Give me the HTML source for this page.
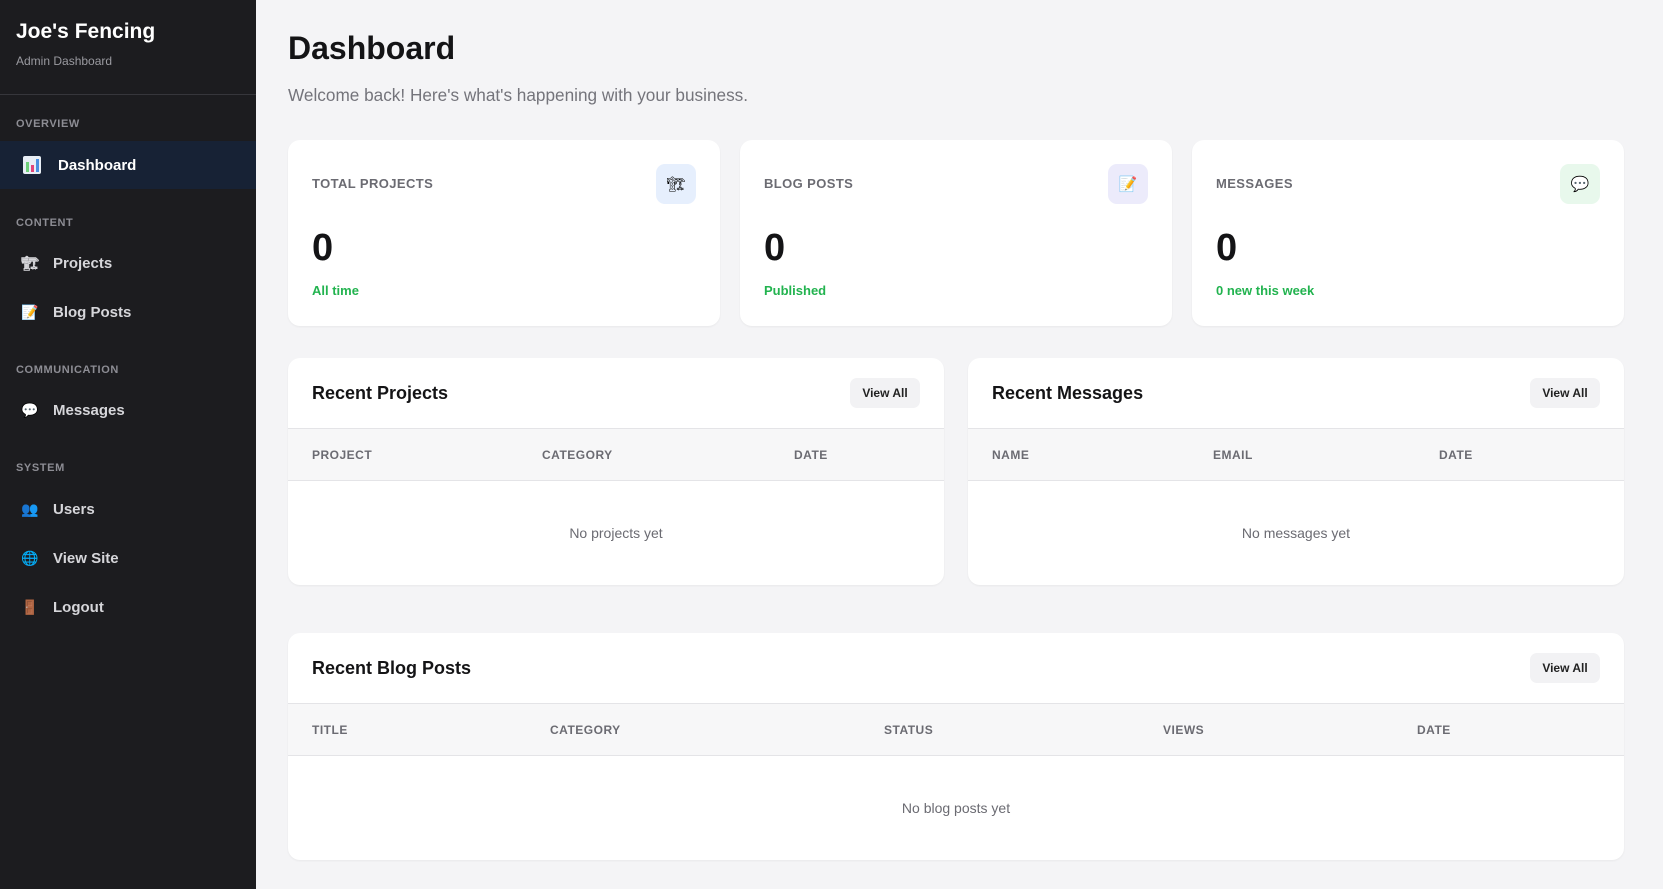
<!DOCTYPE html>
<html><head><meta charset="utf-8"><style>
*{margin:0;padding:0;box-sizing:border-box}
body{width:1663px;height:889px;overflow:hidden;background:#f4f4f6;font-family:"Liberation Sans",sans-serif;position:relative}
.sb{position:absolute;left:0;top:0;width:256px;height:889px;background:#1c1c1f}
.abs{position:absolute}
.sec{position:absolute;left:16px;font-size:11px;font-weight:bold;color:#8d8d94;letter-spacing:.6px}
.item{position:absolute;left:0;width:256px;height:48px;display:flex;align-items:center;padding-left:20px;font-size:15px;font-weight:bold;color:#d6d6da}
.item .ic{width:20px;height:20px;margin-right:13px;font-size:14px;display:flex;align-items:center;justify-content:center}
.card{position:absolute;background:#fff;border-radius:12px;box-shadow:0 1px 2px rgba(0,0,0,.05)}
.lbl{position:absolute;left:24px;top:36px;font-size:13px;font-weight:bold;color:#6b6b72;letter-spacing:.4px}
.num{position:absolute;left:24px;top:87px;font-size:38px;font-weight:bold;color:#141416}
.sub{position:absolute;left:24px;top:143px;font-size:13px;color:#22b34f;font-weight:bold}
.icb{position:absolute;right:24px;top:24px;width:40px;height:40px;border-radius:9px;display:flex;align-items:center;justify-content:center;font-size:15px}
.th{position:absolute;font-size:18px;font-weight:bold;color:#141416;left:24px;top:25px}
.btn{position:absolute;right:24px;top:20px;width:70px;height:30px;background:#f2f2f4;border-radius:7px;font-size:12px;font-weight:bold;color:#222;display:flex;align-items:center;justify-content:center}
.ch{position:absolute;left:0;right:0;background:#f7f7f8;border-top:1px solid #e4e4e7;border-bottom:1px solid #e4e4e7}
.ch span{position:absolute;top:19px;font-size:12px;font-weight:bold;color:#6b6b72;letter-spacing:.5px}
.emp{position:absolute;left:0;right:0;text-align:center;font-size:14px;color:#6b6b72}
</style></head><body>
<div class="sb">
<div class="abs" style="left:16px;top:20px;font-size:21px;font-weight:bold;color:#fff">Joe's Fencing</div>
<div class="abs" style="left:16px;top:54px;font-size:12px;color:#9a9aa0">Admin Dashboard</div>
<div class="abs" style="left:0;top:94px;width:256px;height:1px;background:#36363b"></div>
<div class="sec" style="top:118px">OVERVIEW</div>
<div class="item" style="top:141px;background:#172235;color:#fff;padding-left:22px"><span class="ic" style="margin-right:16px"><svg width="18" height="18"><rect width="18" height="18" rx="2" fill="#e8eef5"/><rect x="3" y="6" width="3" height="10" fill="#6fd07a"/><rect x="8" y="9" width="3" height="7" fill="#e2457a"/><rect x="13" y="3" width="3" height="13" fill="#4a8fe0"/></svg></span>Dashboard</div>
<div class="sec" style="top:217px">CONTENT</div>
<div class="item" style="top:239px"><span class="ic">🏗</span>Projects</div>
<div class="item" style="top:288px"><span class="ic">📝</span>Blog Posts</div>
<div class="sec" style="top:364px">COMMUNICATION</div>
<div class="item" style="top:386px"><span class="ic">💬</span>Messages</div>
<div class="sec" style="top:462px">SYSTEM</div>
<div class="item" style="top:485px"><span class="ic">👥</span>Users</div>
<div class="item" style="top:534px"><span class="ic">🌐</span>View Site</div>
<div class="item" style="top:583px"><span class="ic">🚪</span>Logout</div>
</div>

<div class="abs" style="left:288px;top:30px;font-size:32px;font-weight:bold;color:#141416">Dashboard</div>
<div class="abs" style="left:288px;top:85px;font-size:17.2px;color:#74747b">Welcome back! Here's what's happening with your business.</div>

<div class="card" style="left:288px;top:140px;width:432px;height:186px"><div class="lbl">TOTAL PROJECTS</div><div class="icb" style="background:#e6effd">🏗</div><div class="num">0</div><div class="sub">All time</div></div>
<div class="card" style="left:740px;top:140px;width:432px;height:186px"><div class="lbl">BLOG POSTS</div><div class="icb" style="background:#ecebfb">📝</div><div class="num">0</div><div class="sub">Published</div></div>
<div class="card" style="left:1192px;top:140px;width:432px;height:186px"><div class="lbl">MESSAGES</div><div class="icb" style="background:#e8f8ec">💬</div><div class="num">0</div><div class="sub">0 new this week</div></div>

<div class="card" style="left:288px;top:358px;width:656px;height:227px"><div class="th">Recent Projects</div><div class="btn">View All</div>
<div class="ch" style="top:70px;height:53px"><span style="left:24px">PROJECT</span><span style="left:254px">CATEGORY</span><span style="left:506px">DATE</span></div>
<div class="emp" style="top:167px">No projects yet</div></div>

<div class="card" style="left:968px;top:358px;width:656px;height:227px"><div class="th">Recent Messages</div><div class="btn">View All</div>
<div class="ch" style="top:70px;height:53px"><span style="left:24px">NAME</span><span style="left:245px">EMAIL</span><span style="left:471px">DATE</span></div>
<div class="emp" style="top:167px">No messages yet</div></div>

<div class="card" style="left:288px;top:633px;width:1336px;height:227px"><div class="th">Recent Blog Posts</div><div class="btn">View All</div>
<div class="ch" style="top:70px;height:53px"><span style="left:24px">TITLE</span><span style="left:262px">CATEGORY</span><span style="left:596px">STATUS</span><span style="left:875px">VIEWS</span><span style="left:1129px">DATE</span></div>
<div class="emp" style="top:167px">No blog posts yet</div></div>
</body></html>
